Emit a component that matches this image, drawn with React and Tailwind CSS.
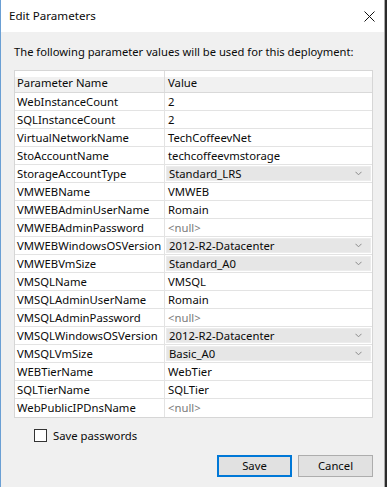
import React from 'react';

const params = [
    { name: 'WebInstanceCount', value: '2' },
    { name: 'SQLInstanceCount', value: '2' },
    { name: 'VirtualNetworkName', value: 'TechCoffeevNet' },
    { name: 'StoAccountName', value: 'techcoffeevmstorage' },
    { name: 'StorageAccountType', value: 'Standard_LRS', select: true },
    { name: 'VMWEBName', value: 'VMWEB' },
    { name: 'VMWEBAdminUserName', value: 'Romain' },
    { name: 'VMWEBAdminPassword', value: null },
    { name: 'VMWEBWindowsOSVersion', value: '2012-R2-Datacenter', select: true },
    { name: 'VMWEBVmSize', value: 'Standard_A0', select: true },
    { name: 'VMSQLName', value: 'VMSQL' },
    { name: 'VMSQLAdminUserName', value: 'Romain' },
    { name: 'VMSQLAdminPassword', value: null },
    { name: 'VMSQLWindowsOSVersion', value: '2012-R2-Datacenter', select: true },
    { name: 'VMSQLVmSize', value: 'Basic_A0', select: true },
    { name: 'WEBTierName', value: 'WebTier' },
    { name: 'SQLTierName', value: 'SQLTier' },
    { name: 'WebPublicIPDnsName', value: null },
];

const Chevron = () => (
    <svg width="7" height="5" viewBox="0 0 7 5" className="shrink-0">
        <path d="M0.5 0.8 L3.5 3.8 L6.5 0.8" fill="none" stroke="#8a8a8a" strokeWidth="1" />
    </svg>
);

const ValueCell = ({ param }) => {
    if (param.select) {
        return (
            <div className="flex-1 min-w-0 h-full p-px">
                <div className="h-full bg-[#e6e6e6] border border-[#ececec] flex items-center pl-[2px] pr-[8px]">
                    <span className="flex-1 whitespace-nowrap">{param.value}</span>
                    <Chevron />
                </div>
            </div>
        );
    }
    if (param.value === null) {
        return <div className="flex-1 min-w-0 pl-[3px] text-[#7a7a7a] whitespace-nowrap">&lt;null&gt;</div>;
    }
    return <div className="flex-1 min-w-0 pl-[3px] whitespace-nowrap">{param.value}</div>;
};

const App = () => {
    return (
        <div className="w-[387px] h-[487px] bg-[#2b2b2b] flex overflow-hidden text-[11.3px] leading-[16px] text-[#0a0a0a] [font-family:'Noto_Sans','Liberation_Sans',sans-serif]">
            <div className="w-[385px] h-full bg-[#f0f0f0] border-l border-[#6a9fd4] border-r border-r-[#a9a9a9] flex flex-col">
                {/* Title bar */}
                <div className="h-[32px] bg-white flex items-center justify-between pl-[8px] pr-[9px] shrink-0">
                    <span className="text-[11.6px]">Edit Parameters</span>
                    <svg width="11" height="11" viewBox="0 0 11 11">
                        <path d="M0.5 0.5 L10.5 10.5 M10.5 0.5 L0.5 10.5" stroke="#111" strokeWidth="1" />
                    </svg>
                </div>

                {/* Body */}
                <div className="flex-1 flex flex-col pl-[13px] pr-[11px]">
                    <p className="h-[16px] mt-[12px] whitespace-nowrap text-[11.2px]">
                        The following parameter values will be used for this deployment:
                    </p>

                    <div className="mt-[10px] w-[359px] border border-[#d6d6d6] bg-white">
                        <div className="flex h-[22px] bg-[linear-gradient(#ffffff_0%,#ffffff_30%,#f1f1f1_30%)] border-b border-[#d9d9d9]">
                            <div className="w-[150px] border-r border-[#dcdcdc] flex items-center pl-[2px] pt-[2px] whitespace-nowrap">Parameter Name</div>
                            <div className="flex-1 flex items-center pl-[3px] pt-[2px]">Value</div>
                        </div>
                        {params.map((p) => (
                            <div key={p.name} className="flex h-[18px] items-center border-b border-[#e3e3e3] last:border-b-0">
                                <div className="w-[150px] h-full border-r border-[#e3e3e3] flex items-center pl-[2px] whitespace-nowrap">{p.name}</div>
                                <div className="flex-1 min-w-0 h-full flex items-center">
                                    <ValueCell param={p} />
                                </div>
                            </div>
                        ))}
                    </div>

                    {/* Save passwords */}
                    <label className="mt-[11px] ml-[20px] flex items-center gap-[6px] h-[13px]">
                        <span className="w-[13px] h-[13px] border border-[#333] bg-white shrink-0" />
                        <span className="whitespace-nowrap">Save passwords</span>
                    </label>

                    {/* Buttons */}
                    <div className="mt-[13px] flex justify-end gap-[6px]">
                        <button className="w-[75px] h-[22px] bg-[#e1e1e1] border border-[#0078d7] outline outline-1 outline-[#0078d7] -outline-offset-2">Save</button>
                        <button className="w-[75px] h-[22px] bg-[#e1e1e1] border border-[#adadad]">Cancel</button>
                    </div>
                </div>
            </div>
        </div>
    );
};

export default App;
